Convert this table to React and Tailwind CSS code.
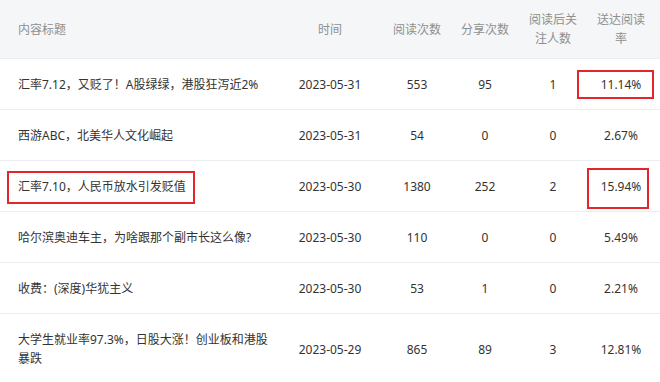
const rows = [
  { title: ['汇率7.12，又贬了！A股绿绿，港股狂泻近2%'], date: '2023-05-31', read: 553, share: 95, follow: 1, rate: '11.14%', box: 'rate1' },
  { title: ['西游ABC，北美华人文化崛起'], date: '2023-05-31', read: 54, share: 0, follow: 0, rate: '2.67%' },
  { title: ['汇率7.10，人民币放水引发贬值'], date: '2023-05-30', read: 1380, share: 252, follow: 2, rate: '15.94%', box: 'both' },
  { title: ['哈尔滨奥迪车主，为啥跟那个副市长这么像?'], date: '2023-05-30', read: 110, share: 0, follow: 0, rate: '5.49%' },
  { title: ['收费：(深度)华犹主义'], date: '2023-05-30', read: 53, share: 1, follow: 0, rate: '2.21%' },
  { title: ['大学生就业率97.3%，日股大涨！创业板和港股', '暴跌'], date: '2023-05-29', read: 865, share: 89, follow: 3, rate: '12.81%' },
]

const cols = 'grid grid-cols-[285px_90px_84px_52px_84px_65px]'

export default function App() {
  return (
    <main
      className="w-[660px] h-[382px] overflow-hidden bg-white text-[12px] text-[#333]"
      style={{ fontFamily: '"Noto Sans", "Noto Sans CJK SC", sans-serif' }}
    >
      {/* 表头 */}
      <div className={`${cols} h-[59px] items-center bg-[#f5f6f8] text-[#8f8f8f] leading-[19px] border-b border-[#ebedf0]`}>
        <div className="pl-[18px]">内容标题</div>
        <div className="text-center">时间</div>
        <div className="text-center">阅读次数</div>
        <div className="text-center">分享次数</div>
        <div className="text-center">阅读后关<br />注人数</div>
        <div className="text-center pr-[13px]">送达阅读<br />率</div>
      </div>

      {rows.map((r, i) => (
        <div
          key={i}
          className={`${cols} relative pt-[16px] pb-[15px] items-center leading-[19px] border-b border-[#ebedf0]`}
        >
          <div className="pl-[18px] whitespace-nowrap">
            {r.title.map((t, j) => <div key={j}>{t}</div>)}
          </div>
          <div className="text-center">{r.date}</div>
          <div className="text-center">{r.read}</div>
          <div className="text-center">{r.share}</div>
          <div className="text-center">{r.follow}</div>
          <div className="text-center pr-[13px]">{r.rate}</div>

          {r.box === 'rate1' && (
            <div className="absolute left-[577px] top-[11px] w-[77px] h-[29px] border-2 border-[#e3262b]" />
          )}
          {r.box === 'both' && (
            <>
              <div className="absolute left-[7px] top-[10px] w-[188px] h-[33px] border-2 border-[#e3262b]" />
              <div className="absolute left-[587px] top-[7px] w-[62px] h-[41px] border-2 border-[#e3262b]" />
            </>
          )}
        </div>
      ))}
    </main>
  )
}
